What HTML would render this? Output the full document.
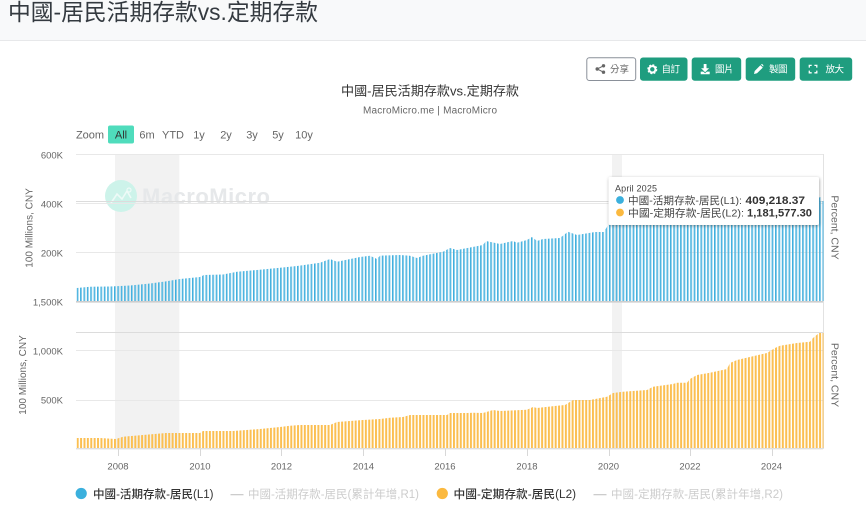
<!DOCTYPE html>
<html lang="zh-Hant">
<head>
<meta charset="utf-8">
<title>中國-居民活期存款vs.定期存款</title>
<style>
html,body{margin:0;padding:0;width:866px;height:507px;overflow:hidden;background:#fff}
svg{display:block}
text{font-family:"Liberation Sans","Noto Sans CJK TC",sans-serif}
</style>
</head>
<body>
<svg width="866" height="507" viewBox="0 0 866 507" xmlns="http://www.w3.org/2000/svg">
<defs>
<pattern id="pb" patternUnits="userSpaceOnUse" x="76.7" y="0" width="3.39" height="10">
<rect x="0" width="1.3" height="10" fill="#3eaedd"/><rect x="1.3" width="0.6" height="10" fill="#86cdea"/>
</pattern>
<pattern id="po" patternUnits="userSpaceOnUse" x="76.7" y="0" width="3.39" height="10">
<rect x="0" width="2" height="10" fill="#fbbf52"/>
</pattern>
<filter id="sh" x="-5%" y="-20%" width="110%" height="140%"><feDropShadow dx="0.5" dy="1" stdDeviation="1.6" flood-color="#000" flood-opacity=".35"/></filter>
</defs>

<!-- header -->
<rect width="866" height="40" fill="#f8f9fa"/>
<rect y="40" width="866" height="1" fill="#e7e8ea"/>
<text x="8" y="20" font-size="23" fill="#343a40" textLength="310" lengthAdjust="spacingAndGlyphs">中國-居民活期存款vs.定期存款</text>

<!-- buttons -->
<rect x="586.8" y="57.8" width="48.9" height="22.7" rx="2.5" fill="#fff" stroke="#8a9099" stroke-width="1"/>
<g fill="#666"><path d="M603.5 65.8 597.2 69 603.5 72.2" fill="none" stroke="#666" stroke-width="1"/><circle cx="603.5" cy="65.8" r="1.7"/><circle cx="597.2" cy="69" r="1.7"/><circle cx="603.5" cy="72.2" r="1.7"/></g>
<text x="610" y="72.5" font-size="9.5" fill="#666" textLength="19">分享</text>

<g fill="#1f9d7f">
<rect x="640" y="57.5" width="47.5" height="23.3" rx="3"/>
<rect x="691.7" y="57.5" width="49.5" height="23.3" rx="3"/>
<rect x="745.7" y="57.5" width="49.5" height="23.3" rx="3"/>
<rect x="799.7" y="57.5" width="52.5" height="23.3" rx="3"/>
</g>
<!-- cog -->
<circle cx="652.3" cy="69.3" r="3.2" fill="none" stroke="#fff" stroke-width="2"/>
<circle cx="652.3" cy="69.3" r="4.4" fill="none" stroke="#fff" stroke-width="1.2" stroke-dasharray="2 1.45"/>
<text x="661.5" y="72.5" font-size="9.5" fill="#fff" textLength="18.5">自訂</text>
<!-- download -->
<path d="M703.7 64h2.8v4.2h2.6l-4 4-4-4h2.6z" fill="#fff"/>
<path d="M700.7 71.6h2.6l1.8 1.6 1.8-1.6h2.8v2.6h-9z" fill="#fff"/>
<text x="715" y="72.5" font-size="9.5" fill="#fff" textLength="18.5">圖片</text>
<!-- pencil -->
<path d="M754 74l.7-3 5.7-5.8 2.4 2.4-5.8 5.7zM761 64.6l1-.7 1.4 1.4-.2 1.3z" fill="#fff"/>
<text x="769" y="72.5" font-size="9.5" fill="#fff" textLength="18.5">製圖</text>
<!-- expand -->
<path d="M809.3 67.6v-2.2h2.4M814.4 65.4h2.4v2.2M816.8 70.6v2.2h-2.4M811.7 72.8h-2.4v-2.2" fill="none" stroke="#fff" stroke-width="1.3"/>
<text x="825.5" y="72.5" font-size="9.5" fill="#fff" textLength="18.5">放大</text>

<!-- chart title -->
<text x="341" y="95.5" font-size="13" fill="#333" textLength="178" lengthAdjust="spacingAndGlyphs">中國-居民活期存款vs.定期存款</text>
<text x="363" y="113.5" font-size="10" fill="#666" textLength="134">MacroMicro.me | MacroMicro</text>

<!-- range selector -->
<text x="76" y="138.5" font-size="11" fill="#666" textLength="28">Zoom</text>
<rect x="108" y="125.5" width="26" height="18" rx="2" fill="#4fdcbc"/>
<g font-size="11" text-anchor="middle" fill="#666">
<text x="121" y="138.5" fill="#333">All</text>
<text x="147" y="138.5">6m</text>
<text x="173" y="138.5">YTD</text>
<text x="199" y="138.5">1y</text>
<text x="226" y="138.5">2y</text>
<text x="252" y="138.5">3y</text>
<text x="278" y="138.5">5y</text>
<text x="304" y="138.5">10y</text>
</g>

<!-- plot bands -->
<rect x="115" y="154" width="64.3" height="295" fill="#f2f2f2"/>
<rect x="612" y="154" width="10" height="295" fill="#f2f2f2"/>

<!-- watermark -->
<circle cx="121" cy="196" r="16" fill="#cdf3ea"/>
<path d="M111 203l6-9 5 5 5-8 4 7" fill="none" stroke="#eefaf7" stroke-width="1.6"/>
<circle cx="129" cy="190" r="2" fill="none" stroke="#eefaf7" stroke-width="1.2"/>
<text x="142" y="204" font-size="22" font-weight="bold" fill="#e6e8ea" textLength="128">MacroMicro</text>

<!-- gridlines -->
<g stroke="#e8e8e8" stroke-width="1">
<path d="M76 154.5H823"/><path d="M76 203.5H823"/><path d="M76 252.5H823"/>
<path d="M76 350.5H823"/><path d="M76 400.5H823"/>
</g>
<path d="M76 201.5H823" stroke="#dcdcdc"/>
<path d="M76 332.5H823" stroke="#dcdcdc"/>
<path d="M823.5 154V449" stroke="#e2e2e2"/>

<!-- top bars -->
<polygon fill="url(#pb)" points="76.7,301 76.7,288 90,286.7 110,286.5 130,285.5 150,283.5 165,281.5 180,279 200,277 204,275 223,274.5 237,271.7 257,270 280,267.7 297,266 320,262.7 330,259 337,261.7 360,257 370,255.7 377,259 380,255.7 400,255 410,255.7 417,258 423,255.7 443,251.7 450,248 457,250 483,245 486,241 500,244 513,241 517,242.7 527,240 532,237 537,241 543,239 560,238 568,231.7 577,235 595,232 604,232 608,225 640,222 680,218 720,212 760,206 800,200 818,198 820.5,197 820.5,201 823.5,201 823.5,301"/>
<!-- bottom bars -->
<polygon fill="url(#po)" points="76.7,448 76.7,438 100,438 116,439 123,436.7 166,433 200,433 203,431 233,431 260,429 280,427 290,425.7 300,425 320,425 330,425 337,422 350,421 363,420 380,419 390,417.7 403,417 410,415 447,415 450,413 467,413 473,412.7 483,413 493,410 500,411 527,409.7 533,407 537,408 557,405.7 565,405 573,400 590,400 607,396.7 613,393 623,391.7 647,390 653,386.7 673,384 677,382.7 687,382.7 690,379 697,375 710,372.7 727,369 730,363 737,360 767,353 775,348 780,345.7 797,343 810,341.7 813,338 819,333 823.5,333 823.5,448"/>

<!-- baselines -->
<rect x="76" y="301" width="747" height="1.6" fill="#cdcdcd"/>
<rect x="76" y="448" width="747" height="1.4" fill="#dedede"/>

<!-- x ticks -->
<g stroke="#d8d8d8" stroke-width="1">
<path d="M118.5 449v7M200.5 449v7M281.5 449v7M363.5 449v7M445.5 449v7M527.5 449v7M609.5 449v7M690.5 449v7M772.5 449v7"/>
</g>
<g font-size="9.5" fill="#666" text-anchor="middle">
<text x="118" y="469.5">2008</text><text x="200" y="469.5">2010</text><text x="281.5" y="469.5">2012</text>
<text x="363.5" y="469.5">2014</text><text x="445" y="469.5">2016</text><text x="527" y="469.5">2018</text>
<text x="608.5" y="469.5">2020</text><text x="690" y="469.5">2022</text><text x="771.5" y="469.5">2024</text>
</g>

<!-- y labels -->
<g font-size="9.5" fill="#666" text-anchor="end">
<text x="63" y="158.5">600K</text><text x="63" y="207.5">400K</text><text x="63" y="256.5">200K</text>
<text x="63" y="305.5">1,500K</text><text x="63" y="354.5">1,000K</text><text x="63" y="403.5">500K</text>
</g>
<g font-size="10" fill="#666" text-anchor="middle">
<text transform="translate(32.5,228) rotate(-90)">100 Millions, CNY</text>
<text transform="translate(26,375) rotate(-90)">100 Millions, CNY</text>
<text transform="translate(831.5,227.5) rotate(90)" font-size="10.5">Percent, CNY</text>
<text transform="translate(831.5,375) rotate(90)" font-size="10.5">Percent, CNY</text>
</g>

<!-- tooltip -->
<rect x="608.5" y="177" width="210.5" height="48" rx="2" fill="#fff" filter="url(#sh)"/>
<text x="615" y="191.5" font-size="9" fill="#444" textLength="42">April 2025</text>
<circle cx="620" cy="200" r="3.9" fill="#3bb0dd"/>
<circle cx="620" cy="212.5" r="3.9" fill="#fbb93f"/>
<text x="628" y="204" font-size="10.5" fill="#444" textLength="114" lengthAdjust="spacingAndGlyphs">中國-活期存款-居民(L1):</text>
<text x="745.5" y="204" font-size="11" font-weight="bold" fill="#333" textLength="59.5" lengthAdjust="spacingAndGlyphs">409,218.37</text>
<text x="628" y="216.5" font-size="10.5" fill="#444" textLength="116" lengthAdjust="spacingAndGlyphs">中國-定期存款-居民(L2):</text>
<text x="747" y="216.5" font-size="11" font-weight="bold" fill="#333" textLength="65" lengthAdjust="spacingAndGlyphs">1,181,577.30</text>

<!-- legend -->
<circle cx="81.2" cy="493.5" r="5.6" fill="#3bb0dd"/>
<text x="93" y="498" font-size="11.5" font-weight="500" fill="#333" textLength="120.5" lengthAdjust="spacingAndGlyphs">中國-活期存款-居民(L1)</text>
<rect x="230.5" y="494" width="13" height="1.3" fill="#ccc"/>
<text x="248" y="498" font-size="11.5" fill="#ccc" textLength="171" lengthAdjust="spacingAndGlyphs">中國-活期存款-居民(累計年增,R1)</text>
<circle cx="442.3" cy="493.5" r="5.6" fill="#fbb93f"/>
<text x="453.5" y="498" font-size="11.5" font-weight="500" fill="#333" textLength="122.5" lengthAdjust="spacingAndGlyphs">中國-定期存款-居民(L2)</text>
<rect x="593.5" y="494" width="13" height="1.3" fill="#ccc"/>
<text x="611" y="498" font-size="11.5" fill="#ccc" textLength="172" lengthAdjust="spacingAndGlyphs">中國-定期存款-居民(累計年增,R2)</text>
</svg>
</body>
</html>
